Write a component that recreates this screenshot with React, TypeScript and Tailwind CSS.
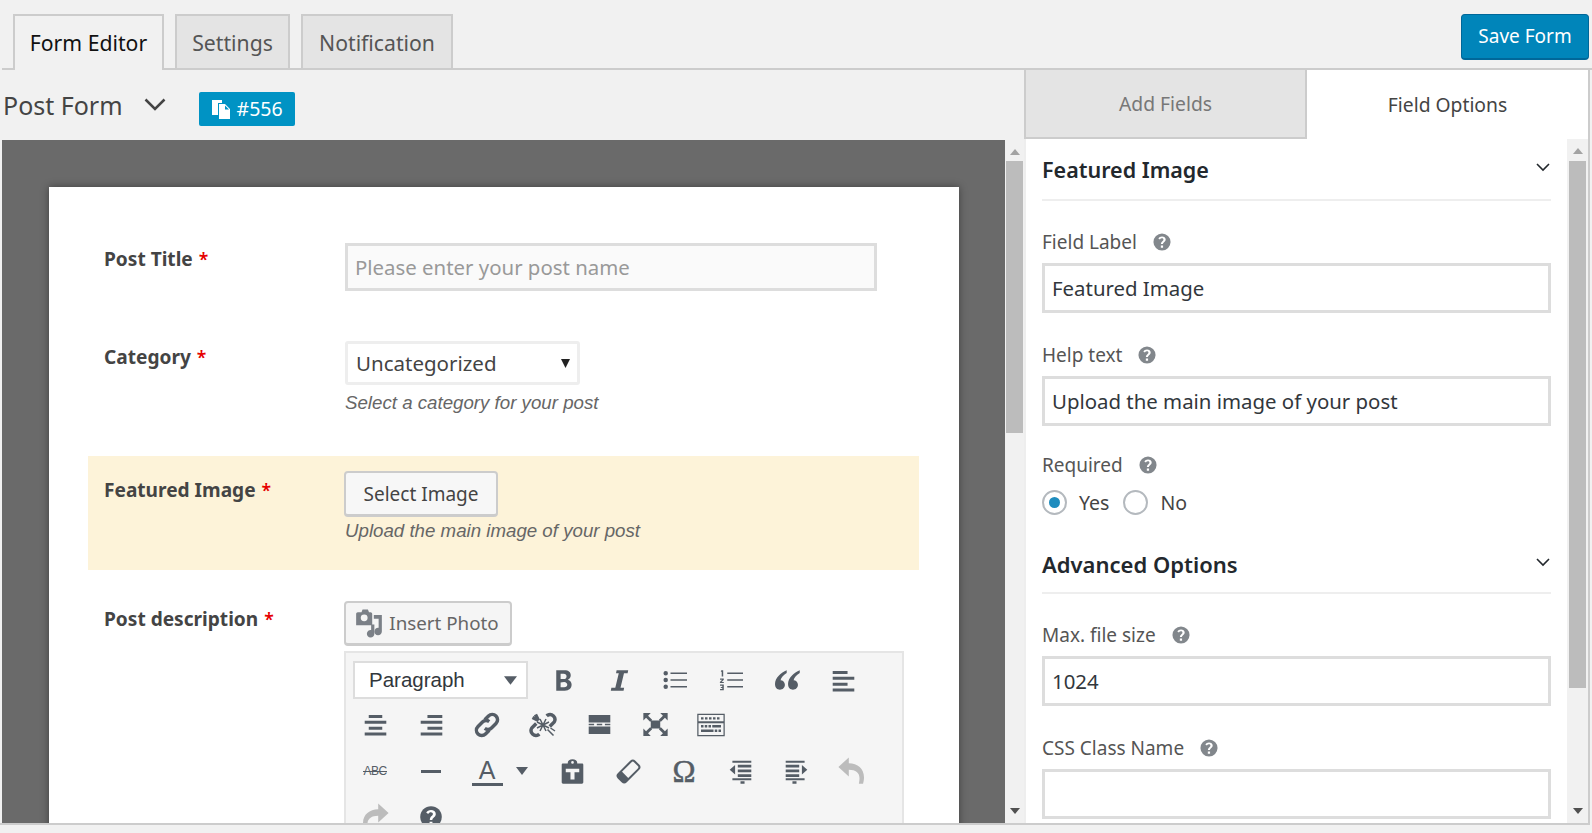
import React from "react";

const C = "#555d66";
type IP = { children: React.ReactNode; w?: number; h?: number; vb?: string };
const Ic = ({ children, w = 27, h = 27, vb = "0 0 20 20" }: IP) => (
  <svg width={w} height={h} viewBox={vb} fill={C} className="block shrink-0">{children}</svg>
);
const Bold = () => <Ic w={29} h={29}><path d="M5 3h5.600C13.600 3 15 4.400 15 6.400c0 1.400-.8 2.500-2 3 1.600.4 2.600 1.700 2.600 3.400C15.600 15.300 14 17 10.800 17H5zm3 2.400V9h2.100c1.300 0 2-.7 2-1.800s-.7-1.800-2-1.800zm0 6V14.600h2.400c1.400 0 2.200-.6 2.200-1.600s-.8-2-2.200-2z" /></Ic>;
const Italic = () => <Ic w={29} h={29}><path d="M8 3h8l-.4 2h-2.500l-2.400 10h2.500l-.4 2H4l.4-2h2.700L9.500 5H7.600z" /></Ic>;
const UL = () => <Ic w={30} h={30}><path d="M5.300 5.500a1.500 1.500 0 1 1-3 0 1.500 1.500 0 0 1 3 0zm0 4.500a1.500 1.500 0 1 1-3 0 1.500 1.500 0 0 1 3 0zm0 4.500a1.500 1.500 0 1 1-3 0 1.500 1.500 0 0 1 3 0zM7 5h11v1H7zm0 4.500h11v1H7zM7 14h11v1H7z" /></Ic>;
const OL = () => <Ic w={30} h={30}><path d="M7.500 5H18v1H7.500zm0 4.500H18v1H7.500zm0 4.500H18v1H7.500z" /><path d="M3.500 3.500h1.300v4.200h-1V4.500h-.6zM2.700 9h2.500v.8L3.800 11.300h1.400v.7H2.600v-.7L4.100 9.800H2.700zm0 4h2.500v3.800H2.700V16h1.500v-.7H3.200v-.6h1v-.9H2.700z" /></Ic>;
const Quote = () => <Ic w={30} h={30}><path d="M9.800 3.500C6 5.300 2 8.300 2 12.700 2 15.200 3.500 16.500 5.300 16.500c1.800 0 3.300-1.400 3.300-3.300s-1.400-3.100-2.900-3.100c.3-1.500 2.200-3.500 4.100-4.700zm8.700 0C14.700 5.300 10.700 8.300 10.700 12.700c0 2.500 1.500 3.800 3.300 3.800s3.300-1.400 3.300-3.300-1.400-3.100-2.900-3.100c.3-1.500 2.200-3.500 4.100-4.700z" /></Ic>;
const AL = () => <Ic><path d="M2 3h11v2.200H2zm0 4.300h16v2.200H2zm0 4.300h11v2.200H2zm0 4.300h16v2.200H2z" /></Ic>;
const AC = () => <Ic><path d="M5 3h10v2.200H5zM2 7.300h16v2.200H2zm3 4.300h10v2.200H5zm-3 4.300h16v2.200H2z" /></Ic>;
const AR = () => <Ic><path d="M7 3h11v2.200H7zM2 7.300h16v2.200H2zm5 4.300h11v2.200H7zm-5 4.300h16v2.200H2z" /></Ic>;
const LinkI = () => <Ic w={30} h={30}><path fill="none" stroke={C} strokeWidth="2.300" d="M8.500 6.500l2.500-2.500a3.500 3.500 0 0 1 5 5l-3 3a3.500 3.500 0 0 1-4.500.3M11.500 13.500L9 16a3.500 3.500 0 0 1-5-5l3-3a3.500 3.500 0 0 1 4.500-.3" /></Ic>;
const Unlink = () => <Ic w={30} h={30}><path fill="none" stroke={C} strokeWidth="2.300" d="M12.500 4l.5-.5a3.300 3.300 0 0 1 4.500 4.500L14.500 11M7.500 16l-.5.5A3.300 3.300 0 0 1 2.500 12L5.500 9M5 3l2 4M3 5l4 2" /><path stroke={C} strokeWidth="1" fill="none" d="M8 6l4 8M6 8l8 4M12 6l-4 8M14 8l-8 4M13 13l4 4M15 12l3 2" /></Ic>;
const More = () => <Ic><path d="M2 3h16v5.500H2zM2 11.500h16V17H2zM2 9.400h4v1.200H2zm6 0h4v1.200H8zm6 0h4v1.200h-4z" /></Ic>;
const Full = () => <Ic><path d="M6.500 7h7v6h-7zM1 1.500h5.500L4.500 3.500 7.500 6.500 6 8 3 5 1 7zm18 0v5.500l-2-2-3 3-1.500-1.500 3-3-2-2zM1 18.500V13l2 2 3-3 1.500 1.500-3 3 2 2zm18 0h-5.500l2-2-3-3L14 12l3 3 2-2z" /></Ic>;
const Kbd = () => (
  <Ic w={30} h={26} vb="0 0 24 20">
    <path fillRule="evenodd" d="M1 1h22v18H1zm1 1v5h20V2zm0 6.500V18h20V8.500z" />
    <path d="M4 3.700h2v1.800H4zm3.200 0h2v1.800h-2zm3.200 0h2v1.800h-2zm3.200 0h2v1.800h-2zm3.200 0h2v1.800h-2zM4 10h2v2H4zm3 0h2v2H7zm3 0h2v2h-2zm3 0h7v2h-7zM4 13.500h10v2H4zm11 0h2v2h-2zm3 0h2v2h-2z" />
  </Ic>
);
const Abc = () => (
  <span className="relative text-[12px] font-['Liberation_Sans',sans-serif] text-[#555d66] leading-none tracking-[-0.5px]">
    ABC<span className="absolute left-0 right-0 top-[6px] h-px bg-[#555d66]" />
  </span>
);
const Hr = () => <span className="block w-[20px] h-[3px] bg-[#555d66]" />;
const Paste = () => <Ic><path fillRule="evenodd" d="M3 4h3.500V3.500C6.500 2 8 1 10 1s3.500 1 3.500 2.500V4H17c.6 0 1 .4 1 1v13c0 .6-.4 1-1 1H3c-.6 0-1-.4-1-1V5c0-.6.4-1 1-1zm6-.7a1 1 0 1 0 2 0 1 1 0 0 0-2 0zM5 8v2.500h3.500V16h3v-5.500H15V8z" /></Ic>;
const Eraser = () => (
  <Ic>
    <g transform="rotate(45 10 10)">
      <rect x="6" y="1.500" width="8" height="17" rx="2" fill="none" stroke={C} strokeWidth="1.500" />
      <path d="M6 13.500h8v3a2 2 0 0 1-2 2H8a2 2 0 0 1-2-2z" />
    </g>
  </Ic>
);
const Outdent = () => <Ic><path d="M4 2h14v1.500H4zM8 5h10v2H8zm0 3.500h10v2H8zM8 12h10v2H8zM4 15h14v1.500H4zm6 2.300h3V19h-3zM2 8.700l4-3.500v7z" /></Ic>;
const Indent = () => <Ic><path d="M2 2h14v1.500H2zM2 5h10v2H2zm0 3.500h10v2H2zM2 12h10v2H2zm0 3h14v1.500H2zm5 2.300h3V19H7zM18 8.700l-4-3.500v7z" /></Ic>;
const Undo = () => (
  <svg width="32" height="32" viewBox="0 0 20 20" className="block" fill="#bcbcbc">
    <path d="M1.500 7.500L8 1.500v3.700c5.500.2 9.500 3.200 9.500 8.800 0 1.500-.3 2.500-.6 4h-2.600c.2-1.200.4-2.400.4-3.500 0-3.500-2.300-5.200-6.700-5.300V13.500z" />
  </svg>
);
const Redo = () => (
  <svg width="32" height="32" viewBox="0 0 20 20" className="block -scale-x-100" fill="#bcbcbc">
    <path d="M1.500 7.500L8 1.500v3.700c5.500.2 9.500 3.200 9.500 8.800 0 1.500-.3 2.500-.6 4h-2.600c.2-1.200.4-2.400.4-3.500 0-3.500-2.300-5.200-6.700-5.300V13.500z" />
  </svg>
);
const Help = () => (
  <svg width="24" height="24" viewBox="0 0 20 20" className="block">
    <circle cx="10" cy="10" r="9" fill={C} />
    <path fill="#fff" d="M9 12.500h2.100c0-2 2.900-2.200 2.900-5 0-2.200-1.800-3.400-4-3.400-1.800 0-3.200.8-4 2.200l1.700 1.100c.5-.8 1.200-1.300 2.200-1.300s1.700.6 1.700 1.500c0 1.500-2.600 1.800-2.600 4.900zM8.800 14h2.400v2.300H8.800z" />
  </svg>
);
const Tip = () => (
  <svg width="18" height="18" viewBox="0 0 20 20" className="block">
    <circle cx="10" cy="10" r="9.500" fill="#82878c" />
    <path fill="#fff" d="M8.800 12.300h2.300c0-2 3-2.300 3-5 0-2.300-1.800-3.500-4.100-3.500-1.800 0-3.300.8-4.100 2.200l1.800 1.200c.5-.8 1.200-1.300 2.200-1.300s1.700.6 1.700 1.500c0 1.500-2.800 1.800-2.800 4.900zM8.700 14h2.500v2.400H8.700z" />
  </svg>
);
const Caret = ({ w = 12, h = 8 }: { w?: number; h?: number }) => (
  <svg width={w} height={h} viewBox="0 0 12 8" className="block" fill={C}><path d="M0 0h12L6 8z" /></svg>
);
const Chevron = () => (
  <svg width="14" height="9" viewBox="0 0 14 9" className="block" fill="none" stroke="#23282d" strokeWidth="1.600"><path d="M1 1l6 6 6-6" /></svg>
);
const Arrow = ({ up }: { up?: boolean }) => (
  <svg width="10" height="6" viewBox="0 0 10 6" className="block" fill={up ? "#a3a3a3" : "#505050"}>
    <path d={up ? "M0 6h10L5 0z" : "M0 0h10L5 6z"} />
  </svg>
);

const Cell = ({ children, w = 56 }: { children: React.ReactNode; w?: number }) => (
  <div className="flex items-center justify-center shrink-0" style={{ width: w }}>{children}</div>
);

const Scrollbar = ({ thumb, w, top }: { thumb: string; w: string; top: string }) => (
  <div className={`${w} shrink-0 bg-[#f1f1f1] flex flex-col items-center`}>
    <div className={`${top} pt-[9px] flex justify-center shrink-0`}><Arrow up /></div>
    <div className={`w-[17px] bg-[#bcbcbc] shrink-0 ${thumb}`} />
    <div className="flex-1" />
    <div className="h-[20px] pt-[5px] shrink-0"><Arrow /></div>
  </div>
);

const Req = () => <span className="text-[#e60000] font-semibold text-[17.500px] ml-[6px]">*</span>;

const Row = ({ label, h, bg, children, pt = "", lp = "" }: { label: string; h: string; bg?: string; pt?: string; lp?: string; children: React.ReactNode }) => (
  <div className={`flex px-4 ${h} ${bg ?? ""} ${pt}`}>
    <div className={`w-[241px] shrink-0 text-[19.100px] font-bold text-[#444] leading-[28px] ${lp}`}>{label}<Req /></div>
    <div>{children}</div>
  </div>
);

const Hint = ({ children, mt }: { children: React.ReactNode; mt: string }) => (
  <div className={`font-['Liberation_Sans',sans-serif] italic text-[18.700px] leading-[24px] text-[#666] ${mt}`}>{children}</div>
);

const Field = ({ label, value, gap = "" }: { label: string; value?: string; gap?: string }) => (
  <div className={gap}>
    <div className="flex items-center h-[24px] text-[19px] text-[#555]">
      {label}
      <span className="ml-[16px]"><Tip /></span>
    </div>
    <div className="mt-[9px] h-[50px] border-[3px] border-[#ddd] bg-white pl-[7px] flex items-center text-[20.400px] text-[#32373c]">{value}</div>
  </div>
);

const Section = ({ title, chev, size, up }: { title: string; chev: string; size: string; up: string }) => (
  <div className="flex justify-between items-start border-b-2 border-[#eee] h-[32px]">
    <div className={`font-semibold text-[#23282d] leading-[30px] ${size} ${up}`}>{title}</div>
    <div className={`pr-[1px] ${chev}`}><Chevron /></div>
  </div>
);

const Radio = ({ on, label }: { on?: boolean; label: string }) => (
  <div className="flex items-center">
    <span className="w-[25px] h-[25px] rounded-full border-2 border-[#b4b9be] bg-white flex items-center justify-center">
      {on && <span className="w-[11px] h-[11px] rounded-full bg-[#1e8cbe]" />}
    </span>
    <span className="ml-[12px] text-[19.500px] text-[#444]">{label}</span>
  </div>
);

export default function App() {
  return (
    <div className="w-[1592px] h-[833px] bg-[#f1f1f1] overflow-hidden font-['Noto_Sans','Open_Sans',sans-serif]">
      {/* top bar */}
      <div className="h-[70px] ml-[2px] border-b-2 border-[#ccc] flex items-start justify-between pt-[14px] pr-[3px]">
        <div className="flex pl-[11px]">
          <div className="w-[151px] h-[56px] -mb-[2px] border-2 border-b-0 border-[#ccc] bg-[#f1f1f1] flex items-center justify-center text-[21.200px] text-[#111] relative z-10">Form Editor</div>
          <div className="ml-[11px] w-[115px] h-[54px] pt-[2px] border-2 border-b-0 border-[#ccc] bg-[#e4e4e4] flex items-center justify-center text-[21.200px] text-[#555]">Settings</div>
          <div className="ml-[11px] w-[152px] h-[54px] pt-[2px] border-2 border-b-0 border-[#ccc] bg-[#e4e4e4] flex items-center justify-center text-[21.200px] text-[#555]">Notification</div>
        </div>
        <div className="w-[128px] h-[46px] rounded-[4px] bg-[#0085ba] border border-[#006799] border-b-2 flex items-center justify-center text-white text-[19px] pb-[1px]">Save Form</div>
      </div>

      <div className="h-[755px] flex border-b-2 border-[#ccc] mr-[2px]">
        {/* left */}
        <div className="w-[1024px] shrink-0 flex flex-col">
          <div className="h-[70px] flex items-start shrink-0 pl-[3px]">
            <div className="text-[25px] text-[#444] leading-[34px] mt-[18px]">Post Form</div>
            <svg width="22" height="13" viewBox="0 0 22 13" fill="none" stroke="#444" strokeWidth="2.500" className="ml-[21px] mt-[28px]"><path d="M1.500 1.500l9.500 9.500 9.500-9.500" /></svg>
            <div className="ml-[33px] mt-[22px] w-[96px] h-[34px] rounded-[2px] bg-[#0093c4] flex items-center justify-center text-white text-[19.500px]">
              <svg width="21" height="21" viewBox="0 0 21 21" fill="#fff" className="mr-[5px]">
                <path d="M1 1h10v3H7v12H1z" />
                <path fillRule="evenodd" d="M8 5h6l5 5v10H8zm6 1.500V10.500h4z" />
              </svg>
              #556
            </div>
          </div>
          <div className="flex-1 flex min-h-0 pl-[2px]">
            <div className="w-[1003px] shrink-0 bg-[#6a6a6a] pl-[47px] pt-[47px] overflow-hidden">
              <div className="w-[910px] h-[800px] bg-white shadow-[0_0_8px_rgba(0,0,0,0.4)] pl-[39px] pr-[40px] pt-[56px] text-[#444]">
                <Row label="Post Title" h="h-[98px]" lp="pt-[2px]">
                  <div className="w-[532px] h-[48px] border-[3px] border-[#ddd] bg-[#fafafa] pl-[7px] pt-[1px] flex items-center text-[20.400px] text-[#999]">Please enter your post name</div>
                </Row>
                <Row label="Category" h="h-[115px]" lp="pt-[2px]">
                  <div className="w-[235px] h-[44px] border-[3px] border-[#eee] rounded-[3px] bg-white pl-[8px] pr-[7px] pt-[1px] flex items-center justify-between text-[20.500px] text-[#444]">
                    Uncategorized
                    <svg width="9" height="9" viewBox="0 0 9 9" fill="#222"><path d="M0 0h9L4.500 9z" /></svg>
                  </div>
                  <Hint mt="mt-[6px]">Select a category for your post</Hint>
                </Row>
                <Row label="Featured Image" h="h-[114px]" bg="bg-[#fdf3d9]" pt="pt-[15px]" lp="pt-[5px]">
                  <div className="-ml-[1px] w-[154px] h-[46px] pt-[2px] border-2 border-[#ccc] border-b-[3px] rounded-[4px] bg-[#f7f7f7] flex items-center justify-center text-[19px] text-[#444]">Select Image</div>
                  <Hint mt="mt-[2px]">Upload the main image of your post</Hint>
                </Row>
                <div className="flex px-4 mt-[31px]">
                  <div className="w-[241px] shrink-0 text-[19.100px] font-bold text-[#444] leading-[28px] pt-[4px]">Post description<Req /></div>
                  <div className="-ml-[1px]">
                    <div className="w-[168px] h-[45px] border-2 border-[#ccc] border-b-[3px] rounded-[4px] bg-[#f5f5f5] flex items-center justify-center text-[18.800px] text-[#666]">
                      <svg width="30" height="30" viewBox="0 0 28 28" fill="#7b8087" className="mr-[5px] -ml-[3px]">
                        <path fillRule="evenodd" d="M2 5.500C2 4.700 2.700 4 3.500 4H7l1-2.500h5L14 4h1.500c.8 0 1.500.7 1.500 1.500V16H2zM9.500 6a3.200 3.200 0 1 0 0 6.400 3.200 3.200 0 0 0 0-6.400z" />
                        <path d="M18.500 6.500H26V22a3.500 3.500 0 1 1-3-3.500V10h-4.500z" />
                        <path d="M16 15.500h3V24a3.500 3.500 0 1 1-3-3.400z" />
                      </svg>
                      Insert Photo
                    </div>
                    <div className="mt-[5px] w-[560px] h-[210px] border-2 border-[#e5e5e5] bg-[#f5f5f5] pl-[1px]">
                      <div className="flex items-center h-[50px] pt-[6px] pb-[2px]">
                        <div className="ml-[6px] w-[175px] h-[38px] border-2 border-[#ddd] bg-white pl-[14px] pr-[9px] flex items-center justify-between font-['Liberation_Sans',sans-serif] text-[20.500px] text-[#32373c]">
                          Paragraph
                          <Caret w={13} h={9} />
                        </div>
                        <div className="ml-[7px] flex">
                          <Cell><Bold /></Cell><Cell><Italic /></Cell><Cell><UL /></Cell><Cell><OL /></Cell><Cell><Quote /></Cell><Cell><AL /></Cell>
                        </div>
                      </div>
                      <div className="flex items-center h-[45px] mt-[-1px]">
                        <Cell><AC /></Cell><Cell><AR /></Cell><Cell><LinkI /></Cell><Cell><Unlink /></Cell><Cell><More /></Cell><Cell><Full /></Cell><Cell><Kbd /></Cell>
                      </div>
                      <div className="flex items-center h-[46px] mt-[1px]">
                        <Cell><Abc /></Cell><Cell><Hr /></Cell>
                        <Cell w={85}>
                          <div className="flex items-center -ml-[4px]">
                            <div className="flex flex-col items-center w-[32px]">
                              <span className="font-['Liberation_Sans',sans-serif] text-[25px] leading-[26px] text-[#555d66]">A</span>
                              <span className="block w-[31px] h-[3px] bg-[#555d66]" />
                            </div>
                            <span className="ml-[13px]"><Caret /></span>
                          </div>
                        </Cell>
                        <Cell><Paste /></Cell><Cell><Eraser /></Cell>
                        <Cell><span className="font-['Liberation_Serif',serif] text-[31px] leading-none text-[#555d66] [-webkit-text-stroke:0.5px_#555d66]">Ω</span></Cell>
                        <Cell><Outdent /></Cell><Cell><Indent /></Cell><Cell><Undo /></Cell>
                      </div>
                      <div className="flex items-center h-[46px]">
                        <Cell><Redo /></Cell><Cell><Help /></Cell>
                      </div>
                    </div>
                  </div>
                </div>
              </div>
            </div>
            <Scrollbar thumb="h-[272px]" w="w-[19px]" top="h-[21px]" />
          </div>
        </div>

        {/* right */}
        <div className="flex-1 flex flex-col border-r-2 border-[#ccc] min-w-0">
          <div className="h-[69px] flex shrink-0">
            <div className="w-[283px] pt-[2px] border-l-2 border-r-2 border-b-2 border-[#ccc] bg-[#e4e4e4] flex items-center justify-center text-[19.300px] text-[#777]">Add Fields</div>
            <div className="flex-1 bg-white pt-[2px] flex items-center justify-center text-[19.300px] text-[#444]">Field Options</div>
          </div>
          <div className="flex-1 flex min-h-0">
            <div className="flex-1 min-w-0 bg-white pl-[16px] pr-[16px] pt-[30px] overflow-hidden border-l-2 border-[#eee]">
              <Section title="Featured Image" chev="-mt-[6px]" size="text-[21.500px]" up="-mt-[14px]" />
              <Field label="Field Label" value="Featured Image" gap="mt-[29px]" />
              <Field label="Help text" value="Upload the main image of your post" gap="mt-[30px]" />
              <div className="flex items-center h-[24px] text-[19px] text-[#555] mt-[27px]">Required<span className="ml-[16px]"><Tip /></span></div>
              <div className="flex gap-[14px] mt-[11px]">
                <Radio on label="Yes" />
                <Radio label="No" />
              </div>
              <div className="mt-[45px]"><Section title="Advanced Options" chev="-mt-[4px]" size="text-[22px]" up="-mt-[13px]" /></div>
              <Field label="Max. file size" value="1024" gap="mt-[29px]" />
              <Field label="CSS Class Name" gap="mt-[30px]" />
            </div>
            <Scrollbar thumb="h-[527px]" w="w-[21px]" top="h-[22px]" />
          </div>
        </div>
      </div>
    </div>
  );
}
